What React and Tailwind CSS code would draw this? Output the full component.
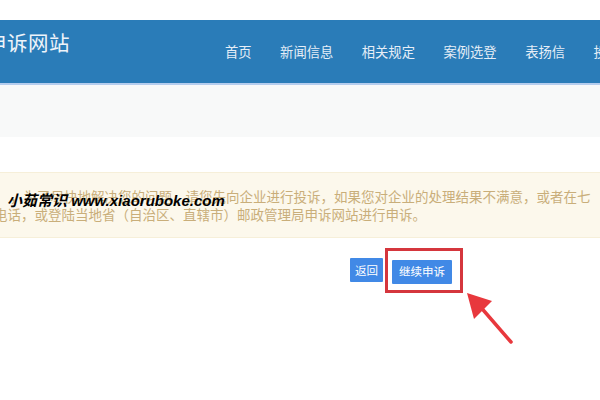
const navItems = ['首页', '新闻信息', '相关规定', '案例选登', '表扬信', '投诉']

const cjk = { fontFamily: '"Noto Sans CJK SC", "Noto Sans", sans-serif' }

const Arrow = () => (
  <svg className="absolute left-[452px] top-[286px]" width="70" height="66" viewBox="0 0 70 66">
    <line x1="59" y1="56" x2="26" y2="18" stroke="#e8383d" strokeWidth="3.5" strokeLinecap="round" />
    <polygon points="15,7 40,15 22,33" fill="#e8383d" />
  </svg>
)

const App = () => {
  return (
    <div className="relative w-[600px] h-[400px] overflow-hidden bg-white" style={cjk}>
      {/* Header */}
      <div className="h-[20px] bg-white" />
      <div className="h-[63px] bg-[#2a7cb8] flex">
        <div className="ml-[-14px] w-[239px] shrink-0 whitespace-nowrap pt-[10px] text-[20.5px] leading-[24px] text-[#eef4fa] tracking-[0.5px]">
          申诉网站
        </div>
        <div className="flex shrink-0 gap-[28.5px] pt-[22px] text-[13.3px] leading-[20px] text-[#e6eef7] whitespace-nowrap">
          {navItems.map((n) => (
            <span key={n}>{n}</span>
          ))}
        </div>
      </div>
      <div className="h-[2px] bg-[#b5cdee]" />
      <div className="h-[52px] bg-[#f8f9f9]" />

      {/* Notice */}
      <div className="mt-[35px] h-[66px] bg-[#fcf8ec] border-t border-b border-[#f6efd9] pt-[14px] text-[13.5px] leading-[18px] text-[#c9ae7a] whitespace-nowrap">
        <div className="ml-[10px]">，为了尽快地解决您的问题，请您先向企业进行投诉，如果您对企业的处理结果不满意，或者在七</div>
        <div className="ml-[-6px]">电话，或登陆当地省（自治区、直辖市）邮政管理局申诉网站进行申诉。</div>
      </div>

      {/* Buttons */}
      <div className="flex items-center ml-[350px] mt-[10px]">
        <button className="h-[24px] w-[33px] bg-[#4189e6] text-white text-[11.5px] rounded-[1px]">返回</button>
        <div className="ml-[2px] border-[3px] border-[#d5363d] pl-[4px] pr-[8px] py-[6px]">
          <button className="h-[24px] w-[60px] bg-[#4189e6] text-white text-[11.5px] rounded-[1px]">继续申诉</button>
        </div>
      </div>

      <Arrow />

      {/* Watermark */}
      <div
        className="absolute left-[7px] top-[190px] text-[15px] font-bold italic text-black whitespace-nowrap"
        style={{ fontFamily: '"Liberation Sans", "Noto Sans CJK SC", sans-serif' }}
      >
        小茹常识 www.xiaoruboke.com
      </div>
    </div>
  )
}

export default App
